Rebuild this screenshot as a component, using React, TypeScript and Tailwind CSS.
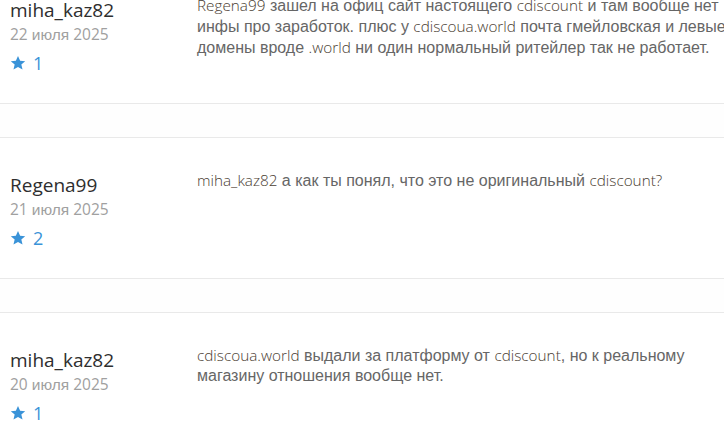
import { ReactNode } from "react";

type Comment = {
  author: string;
  day: string;
  month: string;
  year: string;
  votes: number;
  body: ReactNode;
};

const L = ({ children }: { children: ReactNode }) => (
  <span className="font-['Open_Sans',sans-serif] font-light text-[15.3px] text-[#4a3d32]">{children}</span>
);

const comments: Comment[] = [
  {
    author: "miha_kaz82",
    day: "22",
    month: "июля",
    year: "2025",
    votes: 1,
    body: (
      <>
        <L>Regena99</L> зашел на офиц сайт настоящего <L>cdiscount</L> и там вообще нет
        <br />
        инфы про заработок. плюс у <L>cdiscoua.world</L> почта гмейловская и левые
        <br />
        домены вроде <L>.world</L> ни один нормальный ритейлер так не работает.
      </>
    ),
  },
  {
    author: "Regena99",
    day: "21",
    month: "июля",
    year: "2025",
    votes: 2,
    body: (
      <>
        <L>miha_kaz82</L> а как ты понял, что это не оригинальный <L>cdiscount?</L>
      </>
    ),
  },
  {
    author: "miha_kaz82",
    day: "20",
    month: "июля",
    year: "2025",
    votes: 1,
    body: (
      <>
        <L>cdiscoua.world</L> выдали за платформу от <L>cdiscount</L>, но к реальному
        <br />
        магазину отношения вообще нет.
      </>
    ),
  },
];

function Star() {
  return (
    <svg viewBox="0 0 24 24" className="w-[16px] h-[16px] fill-[#3a93d8]">
      <path d="M12 1.5l3.2 7 7.6.7-5.8 5.1 1.8 7.5L12 17.9l-6.8 3.9 1.8-7.5-5.8-5.1 7.6-.7z" />
    </svg>
  );
}

function CommentRow({ c }: { c: Comment }) {
  return (
    <div className="flex h-[140px]">
      <div className="w-[197px] shrink-0 pl-[10px] pt-[35px]">
        <div className="font-['Open_Sans',sans-serif] font-medium text-[19px] leading-[24px] text-[#2e2e2e]">
          {c.author}
        </div>
        <div className="mt-[1px] text-[15.5px] leading-[22px] text-[#a0a0a0] font-['Open_Sans',sans-serif]">
          {c.day} <span className="font-['Liberation_Sans',sans-serif] text-[15.5px]">{c.month}</span> {c.year}
        </div>
        <div className="mt-[5px] flex items-center gap-[7px] h-[24px]">
          <Star />
          <span className="font-['Open_Sans',sans-serif] text-[18px] leading-[24px] text-[#3a93d8]">
            {c.votes}
          </span>
        </div>
      </div>
      <div className="flex-1 min-w-0 pt-[32px] whitespace-nowrap font-['Liberation_Sans',sans-serif] text-[16px] leading-[20px] text-[#666]">
        {c.body}
      </div>
    </div>
  );
}

export default function App() {
  return (
    <div className="w-[724px] h-[434px] overflow-hidden bg-white">
      <div className="-mt-[37px]">
        {comments.map((c, i) => (
          <div key={i}>
            <CommentRow c={c} />
            {i < comments.length - 1 && (
              <div className="h-[35px] border-y border-[#e9e9e9] bg-[#fefefe]" />
            )}
          </div>
        ))}
      </div>
    </div>
  );
}
